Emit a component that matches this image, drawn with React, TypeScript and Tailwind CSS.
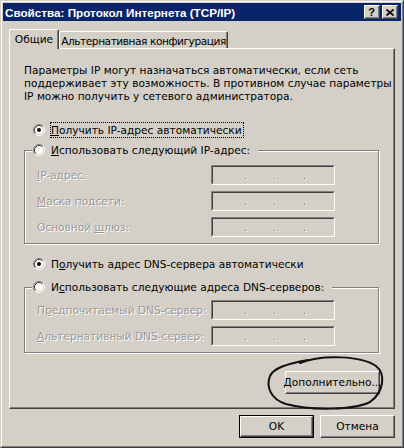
import React from "react";

function Radio({ checked }: { checked?: boolean }) {
  return (
    <svg width="12" height="12" viewBox="0 0 12 12" className="block shrink-0">
      <circle cx="6" cy="6" r="4.5" fill="#ffffff" />
      <path d="M2.11 9.89 A5.5 5.5 0 0 1 9.89 2.11" fill="none" stroke="#808080" strokeWidth="1" />
      <path d="M9.89 2.11 A5.5 5.5 0 0 1 2.11 9.89" fill="none" stroke="#ffffff" strokeWidth="1" />
      <path d="M2.82 9.18 A4.5 4.5 0 0 1 9.18 2.82" fill="none" stroke="#404040" strokeWidth="1" />
      <path d="M9.18 2.82 A4.5 4.5 0 0 1 2.82 9.18" fill="none" stroke="#d4d0c8" strokeWidth="1" />
      {checked && <circle cx="6" cy="6" r="2" fill="#000000" />}
    </svg>
  );
}

function Dot({ ml }: { ml: string }) {
  return <div className={"w-px h-px bg-[#808080] shadow-[1px_1px_0_#ffffff] " + ml} />;
}

function IpField() {
  return (
    <div className="w-[124px] h-[20px] shrink-0 border border-t-[#808080] border-l-[#808080] border-b-white border-r-white">
      <div className="h-full border border-t-[#404040] border-l-[#404040] border-b-[#d4d0c8] border-r-[#d4d0c8] flex items-start pt-[11px]">
        <Dot ml="ml-[32px]" />
        <Dot ml="ml-[28px]" />
        <Dot ml="ml-[29px]" />
      </div>
    </div>
  );
}

function FieldRow({ children }: { children: React.ReactNode }) {
  return (
    <div className="flex items-center h-[20px]">
      <div className="w-[174px] text-[#999999] [text-shadow:1px_1px_0_#ffffff] whitespace-nowrap">{children}</div>
      <IpField />
    </div>
  );
}

function Btn({ children, className }: { children: React.ReactNode; className?: string }) {
  return (
    <div
      className={
        "h-full w-full bg-[#d4d0c8] flex items-center justify-center border border-t-white border-l-white border-r-[#404040] border-b-[#404040] shadow-[inset_-1px_-1px_0_#808080] " +
        (className || "")
      }
    >
      {children}
    </div>
  );
}

export default function App() {
  return (
    <div className="relative w-[404px] h-[448px] bg-[#d4d0c8] text-black text-[10.6px] leading-[13px] font-['Tahoma','DejaVu_Sans',sans-serif] border border-t-[#d4d0c8] border-l-[#d4d0c8] border-r-[#404040] border-b-[#404040]">
      <div className="h-full border border-t-white border-l-white border-r-[#808080] border-b-[#808080] p-px flex flex-col">
        {/* Title bar */}
        <div className="h-[18px] shrink-0 bg-[#0a246a] flex items-center pl-[2px] pr-[3px]">
          <div className="flex-1 text-white font-bold text-[11.7px] font-['Liberation_Sans',sans-serif] whitespace-nowrap">
            Свойства: Протокол Интернета (TCP/IP)
          </div>
          <div className="w-[16px] h-[14px] bg-[#d4d0c8] text-black border border-t-white border-l-white border-r-[#404040] border-b-[#404040] shadow-[inset_-1px_-1px_0_#808080] flex items-center justify-center">
            <span className="font-bold text-[11px] leading-[11px] font-['Liberation_Sans',sans-serif] -ml-px">?</span>
          </div>
          <div className="ml-[2px] w-[16px] h-[14px] bg-[#d4d0c8] border border-t-white border-l-white border-r-[#404040] border-b-[#404040] shadow-[inset_-1px_-1px_0_#808080] flex items-center justify-center">
            <svg width="8" height="7" viewBox="0 0 8 7" className="block -ml-px">
              <path d="M0.5 0.5 L7.5 6.5 M7.5 0.5 L0.5 6.5" stroke="#000" strokeWidth="1.6" />
            </svg>
          </div>
        </div>

        {/* Tabs */}
        <div className="mt-[8px] h-[19px] shrink-0 flex items-end pl-[6px]">
          <div className="relative z-10 w-[50px] h-[20px] -mb-px bg-[#d4d0c8] border-l border-t border-white border-r border-r-[#404040] rounded-t-[2px] shadow-[inset_-1px_0_0_#808080] flex items-center justify-center">
            Общие
          </div>
          <div className="w-[169px] h-[17px] bg-[#d4d0c8] border-l border-t border-white border-r border-r-[#404040] rounded-t-[2px] shadow-[inset_-1px_0_0_#808080] flex items-center justify-center pt-[2px] whitespace-nowrap tracking-[-0.45px]">
            Альтернативная конфигурация
          </div>
        </div>

        {/* Panel */}
        <div className="h-[361px] shrink-0 mx-[6px] border-l border-t border-white border-r border-b border-r-[#404040] border-b-[#404040] shadow-[inset_-1px_-1px_0_#808080] pl-[14px] pr-[15px] pt-[15px] flex flex-col">
          <div className="whitespace-nowrap">
            Параметры IP могут назначаться автоматически, если сеть
            <br />
            поддерживает эту возможность. В противном случае параметры
            <br />
            IP можно получить у сетевого администратора.
          </div>

          <div className="mt-[19px] h-[16px] flex items-center pl-[9px]">
            <Radio checked />
            <span className="ml-[5px] h-[16px] flex items-center border border-dotted border-black pr-[1px] whitespace-nowrap">
              <span className="underline">П</span>олучить IP-адрес автоматически
            </span>
          </div>

          {/* Group 1 */}
          <div className="relative mt-[12px] w-[355px] border border-[#808080] shadow-[inset_1px_1px_0_#ffffff,1px_1px_0_#ffffff] pt-[14px] pl-[12px] pb-[6px] flex flex-col gap-[6px]">
            <div className="absolute -top-[9px] left-[7px] h-[16px] flex items-center bg-[#d4d0c8] pl-[1px] pr-[8px] whitespace-nowrap">
              <Radio />
              <span className="ml-[6px]">
                <span className="underline">И</span>спользовать следующий IP-адрес:
              </span>
            </div>
            <FieldRow>
              <span className="underline">I</span>P-адрес:
            </FieldRow>
            <FieldRow>
              <span className="underline">М</span>аска подсети:
            </FieldRow>
            <FieldRow>
              Основной <span className="underline">ш</span>люз:
            </FieldRow>
          </div>

          <div className="mt-[12px] h-[16px] flex items-center pl-[9px]">
            <Radio checked />
            <span className="ml-[6px] whitespace-nowrap">
              П<span className="underline">о</span>лучить адрес DNS-сервера автоматически
            </span>
          </div>

          {/* Group 2 */}
          <div className="relative mt-[15px] w-[355px] border border-[#808080] shadow-[inset_1px_1px_0_#ffffff,1px_1px_0_#ffffff] pt-[12px] pl-[12px] pb-[6px] flex flex-col gap-[6px]">
            <div className="absolute -top-[9px] left-[7px] h-[16px] flex items-center bg-[#d4d0c8] pl-[1px] pr-[8px] whitespace-nowrap">
              <Radio />
              <span className="ml-[6px]">
                И<span className="underline">с</span>пользовать следующие адреса DNS-серверов:
              </span>
            </div>
            <FieldRow>
              П<span className="underline">р</span>едпочитаемый DNS-сервер:
            </FieldRow>
            <FieldRow>
              <span className="underline">А</span>льтернативный DNS-сервер:
            </FieldRow>
          </div>

          <div className="mt-[18px] flex justify-end -mr-px">
            <div className="w-[95px] h-[23px]">
              <Btn>
                <span className="underline">Д</span>ополнительно...
              </Btn>
            </div>
          </div>
        </div>

        {/* Bottom buttons */}
        <div className="mt-[6px] h-[23px] shrink-0 flex justify-end gap-[6px] pr-[6px]">
          <div className="w-[75px] h-[23px] border border-black">
            <Btn>OK</Btn>
          </div>
          <div className="w-[75px] h-[23px]">
            <Btn>Отмена</Btn>
          </div>
        </div>
      </div>

      {/* Hand-drawn annotation ellipse */}
      <svg
        className="absolute left-[261px] top-[353px] pointer-events-none"
        width="128"
        height="60"
        viewBox="0 0 128 60"
      >
        <path
          d="M38 9 C60 0, 100 2, 114 12 C124 20, 122 38, 108 48 C92 56, 50 57, 24 50 C8 45, 4 32, 8 22 C12 14, 24 10, 46 6"
          fill="none"
          stroke="#111"
          strokeWidth="2"
          strokeLinecap="round"
        />
      </svg>
    </div>
  );
}
